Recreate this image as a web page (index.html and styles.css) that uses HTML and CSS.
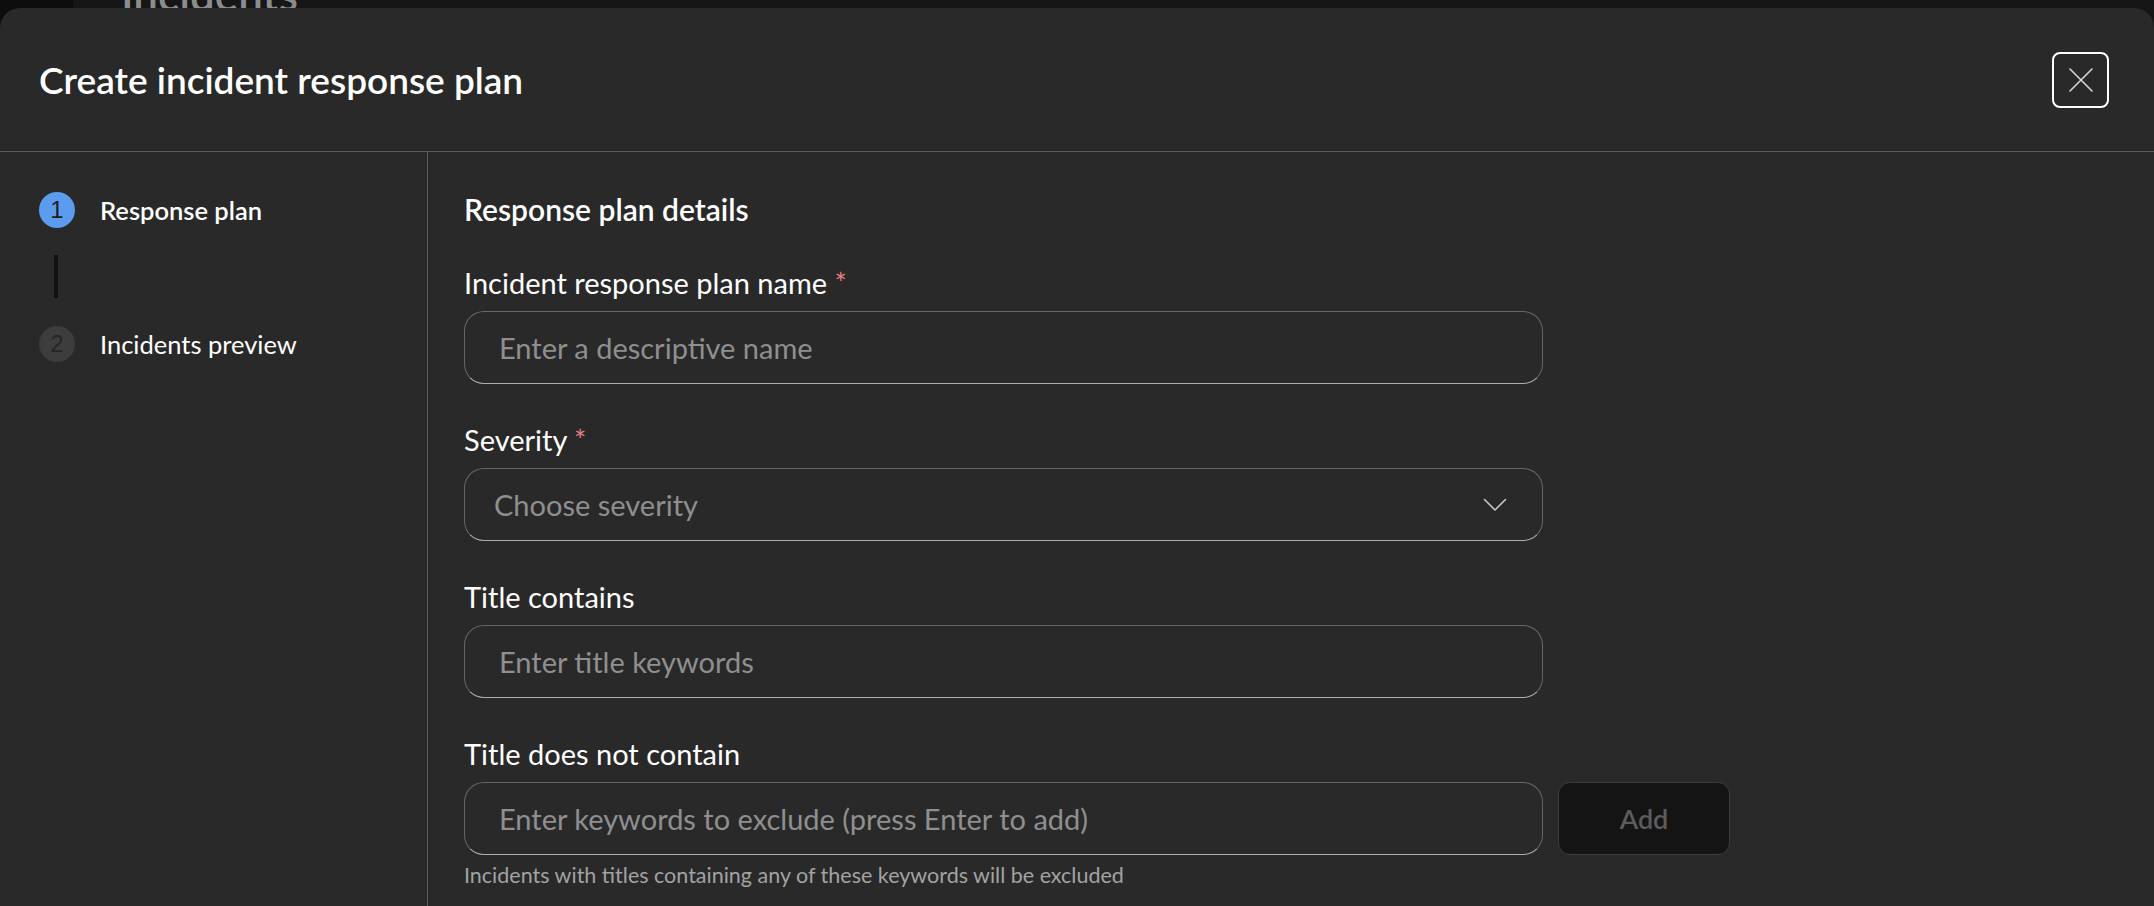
FILE: index.html
```html
<!DOCTYPE html>
<html lang="en">
<head>
    <meta charset="UTF-8">
    <meta name="viewport" content="width=device-width, initial-scale=1.0">
    <title>Incidents</title>
    <link rel="stylesheet" href="styles.css">
</head>
<body>
    <div class="page">
        <nav class="rail"></nav>
        <main class="page-main">
            <h1 class="page-title">Incidents</h1>
        </main>
    </div>

    <div class="dialog" role="dialog" aria-labelledby="dialogTitle">
        <header class="dialog-header">
            <h2 class="dialog-title" id="dialogTitle">Create incident response plan</h2>
            <button class="close-btn" type="button" aria-label="Close">
                <svg width="24" height="24" viewBox="0 0 24 24" fill="none" stroke="#d6d6d6" stroke-width="1.6" stroke-linecap="round">
                    <path d="M1 1 L23 23 M23 1 L1 23"/>
                </svg>
            </button>
        </header>

        <div class="dialog-body">
            <aside class="steps">
                <div class="step step-active">
                    <span class="step-num">1</span>
                    <span class="step-label">Response plan</span>
                </div>
                <div class="step-line"></div>
                <div class="step">
                    <span class="step-num">2</span>
                    <span class="step-label">Incidents preview</span>
                </div>
            </aside>

            <form class="plan-form" onsubmit="return false;">
                <h3 class="form-heading">Response plan details</h3>

                <div class="field">
                    <label for="planName">Incident response plan name <span class="req">*</span></label>
                    <input class="text-input" type="text" id="planName" placeholder="Enter a descriptive name">
                </div>

                <div class="field">
                    <label for="severity">Severity <span class="req">*</span></label>
                    <button class="select" type="button" id="severity">
                        <span class="select-value">Choose severity</span>
                        <svg width="24" height="14" viewBox="0 0 24 14" fill="none" stroke="#c8c8c8" stroke-width="1.6" stroke-linecap="round" stroke-linejoin="round">
                            <path d="M1.5 1.5 L12 12 L22.5 1.5"/>
                        </svg>
                    </button>
                </div>

                <div class="field">
                    <label for="titleContains">Title contains</label>
                    <input class="text-input" type="text" id="titleContains" placeholder="Enter title keywords">
                </div>

                <div class="field">
                    <label for="titleExcludes">Title does not contain</label>
                    <div class="input-row">
                        <input class="text-input" type="text" id="titleExcludes" placeholder="Enter keywords to exclude (press Enter to add)">
                        <button class="add-btn" type="button" disabled>Add</button>
                    </div>
                    <p class="hint">Incidents with titles containing any of these keywords will be excluded</p>
                </div>
            </form>
        </div>
    </div>
</body>
</html>
```

FILE: styles.css
```css
body {
    margin: 0;
    height: 906px;
    overflow: hidden;
    background-color: #161616;
    font-family: "Segoe UI", Lato, sans-serif;
    color: #ffffff;
}
.page {
    display: flex;
    height: 100%;
}
.rail {
    width: 73px;
    background-color: #0d0d0d;
}
.page-main {
    padding-left: 48px;
}
.page-title {
    margin: -32px 0 0 0;
    font-size: 44px;
    line-height: 52px;
    font-weight: 600;
    color: #8c8c8c;
}

/* dialog */
.dialog {
    position: absolute;
    top: 8px;
    left: 0;
    right: 0;
    bottom: 0;
    background-color: #292929;
    border-radius: 20px 20px 0 0;
    display: flex;
    flex-direction: column;
    overflow: hidden;
}
.dialog-header {
    height: 143px;
    flex-shrink: 0;
    display: flex;
    align-items: center;
    justify-content: space-between;
    padding: 0 45px 0 39px;
    border-bottom: 1px solid #5c5c5c;
}
.dialog-title {
    margin: 0;
    font-size: 37px;
    font-weight: 600;
    line-height: 48px;
}
.close-btn {
    width: 57px;
    height: 56px;
    display: flex;
    align-items: center;
    justify-content: center;
    background: transparent;
    border: 2px solid #ffffff;
    border-radius: 8px;
    padding: 0;
    cursor: pointer;
}
.dialog-body {
    flex: 1;
    display: flex;
}

/* steps */
.steps {
    width: 428px;
    box-sizing: border-box;
    border-right: 1px solid #5c5c5c;
    padding: 40px 0 0 39px;
}
.step {
    display: flex;
    align-items: center;
    gap: 25px;
}
.step-num {
    width: 36px;
    height: 36px;
    border-radius: 50%;
    background-color: #3d3d3d;
    color: #262626;
    display: flex;
    align-items: center;
    justify-content: center;
    font-family: "Liberation Sans", Arial, sans-serif;
    font-size: 24px;
}
.step-active .step-num {
    background-color: #5b9cf0;
    color: #1c1c1c;
}
.step-label {
    font-size: 25.5px;
    line-height: 36px;
}
.step-active .step-label {
    font-weight: 600;
}
.step-line {
    width: 4px;
    height: 43px;
    margin: 27px 0 28px 15px;
    background-color: #111111;
}

/* form */
.plan-form {
    padding: 39px 0 0 36px;
}
.form-heading {
    margin: 0 0 38px;
    font-size: 30px;
    font-weight: 600;
    line-height: 36px;
}
.field {
    margin-bottom: 38px;
}
.field label {
    display: block;
    margin-bottom: 10px;
    font-size: 29px;
    line-height: 36px;
}
.req {
    color: #e37d80;
}
.text-input, .select {
    width: 1079px;
    height: 73px;
    box-sizing: border-box;
    background-color: #292929;
    border: 1px solid #666666;
    border-bottom-color: #adadad;
    border-radius: 20px;
    padding: 0 34px;
    font-family: inherit;
    font-size: 29px;
    color: #ffffff;
    outline: none;
}
.text-input::placeholder {
    color: #8f8f8f;
}
.select {
    display: flex;
    align-items: center;
    justify-content: space-between;
    padding: 0 35px 0 29px;
    cursor: pointer;
    text-align: left;
}
.select-value {
    color: #8f8f8f;
}
.input-row {
    display: flex;
    gap: 15px;
}
.add-btn {
    width: 172px;
    height: 73px;
    background-color: #141414;
    border: 1px solid #3d3d3d;
    border-radius: 12px;
    font-family: inherit;
    font-size: 27px;
    font-weight: 600;
    color: #5c5c5c;
}
.hint {
    margin: 7px 0 0;
    font-size: 21.5px;
    line-height: 26px;
    color: #a3a3a3;
}
```
